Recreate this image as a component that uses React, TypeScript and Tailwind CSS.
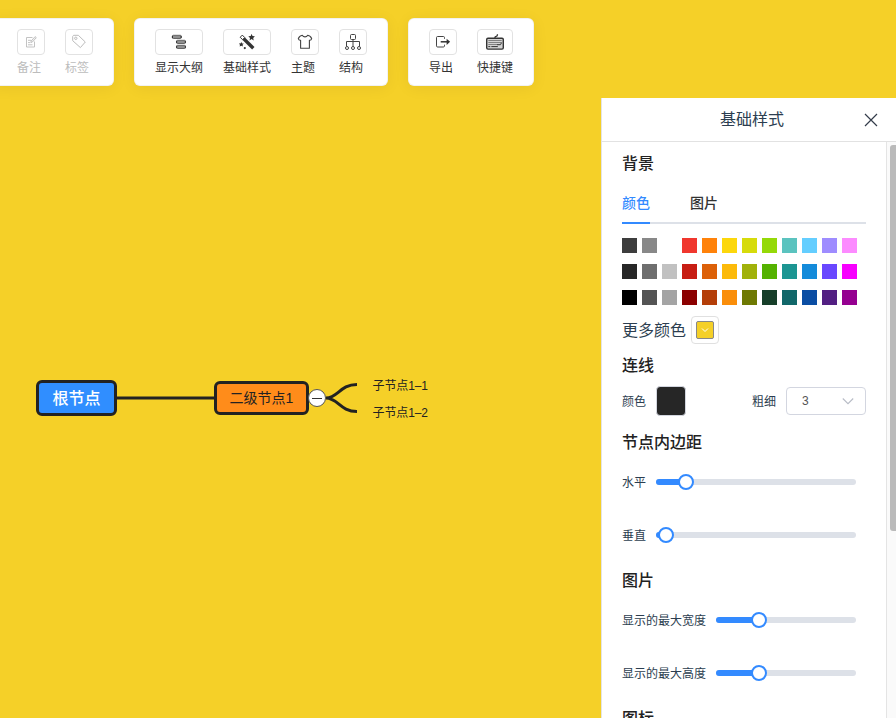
import React from 'react';

const swatches = [
  ['#3d3d3d', '#888888', '#ffffff', '#f0372e', '#ff820a', '#fcd70c', '#d6db0b', '#95d908', '#5bc3bf', '#64ceff', '#9e8cff', '#fc8bff'],
  ['#272727', '#6e6e6e', '#c1c1c1', '#c71d13', '#dc6008', '#fcba0a', '#a1b10a', '#55b200', '#1c9592', '#148bda', '#6947ff', '#f800ff'],
  ['#000000', '#545454', '#a4a4a4', '#8b0000', '#b43e08', '#fa8e0a', '#6e7903', '#163e29', '#116769', '#0a4da3', '#521f82', '#950090'],
];

function NoteIcon() {
  return (
    <svg width="16" height="16" viewBox="0 0 16 16" fill="none" stroke="currentColor" strokeWidth="0.9">
      <path d="M9.5 3.5h-6v9.5h8V7.5" strokeLinejoin="round" />
      <path d="M5 6.3h3M5 8.6h2M5 10.8h4.5" />
      <path d="M7.8 8.6l.4-1.7 3.9-4.3 1.2 1.1-3.9 4.3z" fill="currentColor" fillOpacity="0.25" />
    </svg>
  );
}

function TagIcon() {
  return (
    <svg width="16" height="16" viewBox="0 0 16 16" fill="none" stroke="currentColor" strokeWidth="1" strokeLinejoin="round">
      <path d="M1.7 2.4L2.6 1.3h4.7l7 6.7-4.9 5.6L1.7 6.7z" />
      <circle cx="4.8" cy="4.3" r="1.2" />
    </svg>
  );
}

function OutlineIcon() {
  return (
    <svg width="16" height="16" viewBox="0 0 16 16" fill="#8f8f8f" stroke="#666666" strokeWidth="1">
      <rect x="1.3" y="1.3" width="9" height="3.2" rx="1" />
      <rect x="5.5" y="6.3" width="9" height="3.2" rx="1" />
      <rect x="5.5" y="11.3" width="9" height="3.2" rx="1" />
      <path d="M1.5 2v2M10.1 2v2M5.7 7v2M14.3 7v2M5.7 12v2M14.3 12v2" stroke="#333333" />
    </svg>
  );
}

function WandIcon() {
  return (
    <svg width="16" height="16" viewBox="0 0 16 16" fill="#333333">
      <path d="M4.5 4.5l9.8 9.7" stroke="#333333" strokeWidth="3.4" />
      <path d="M1.2 3.3l2.1-2.2L5.7 3.5 3.6 5.7z" fill="#ffffff" stroke="#333333" strokeWidth="1" strokeLinejoin="round" />
      <path d="M12.6-.2l.9 2.2 2.4.3-1.7 1.6.5 2.5-2.1-1.3-2.1 1.3.5-2.5L9.3 2.3l2.4-.3z" />
      <path d="M2.3 7.9l.8 1.5 1.7.2-1.2 1.2.3 1.7-1.6-.8-1.6.8.3-1.7L-.1 9.6l1.6-.2z" />
      <circle cx="5.8" cy="14.1" r="1.1" />
    </svg>
  );
}

function ShirtIcon() {
  return (
    <svg width="16" height="16" viewBox="0 0 16 16" fill="none" stroke="#444444" strokeWidth="1.1" strokeLinejoin="round">
      <path d="M5.3 1.3C6.5 3.4 9.5 3.4 10.7 1.3c1.7.2 3.3 1.4 4 3.4-.4 1.2-1.4 1.7-2.3 1.5v8H3.6v-8c-.9.2-1.9-.3-2.3-1.5.7-2 2.3-3.2 4-3.4z" />
    </svg>
  );
}

function StructureIcon() {
  return (
    <svg width="16" height="16" viewBox="0 0 16 16" fill="none" stroke="#444444" strokeWidth="1">
      <rect x="5.5" y=".5" width="5" height="5" rx="1" />
      <path d="M8 5.5v7M1.5 12.2V7.5h13v4.7" />
      <circle cx="2" cy="14" r="1.5" />
      <circle cx="8" cy="14" r="1.5" />
      <circle cx="14" cy="14" r="1.5" />
    </svg>
  );
}

function ExportIcon() {
  return (
    <svg width="16" height="16" viewBox="0 0 16 16" fill="none" stroke="#444444" strokeWidth="1">
      <path d="M9.5 4.8V3.6c0-.7-.4-1.1-1.1-1.1H2.6c-.7 0-1.1.4-1.1 1.1v8.3c0 .7.4 1.1 1.1 1.1h5.8c.7 0 1.1-.4 1.1-1.1v-1.2" />
      <path d="M5.7 7.8h7.5" strokeWidth="1.5" stroke="#333333" />
      <path d="M11.6 4.7L15.1 7.8l-3.5 3.1z" fill="#333333" stroke="none" />
    </svg>
  );
}

function KeyboardIcon() {
  return (
    <svg width="20" height="18" viewBox="0 0 20 18" fill="none" stroke="#333333">
      <path d="M10 5.5V4.2c0-.6.4-.9 1.2-.9.9 0 1.3-.4 1.3-2" strokeWidth="1.3" />
      <rect x="1.7" y="5.3" width="16.6" height="10.8" rx="1.3" strokeWidth="1.4" fill="#d4d4d4" />
      <path d="M3.3 7.5h13.4M3.3 9.5h13.4M3.3 11.5h9" stroke="#777777" strokeWidth=".9" />
      <path d="M3.3 13.6h2M6.3 13.6h6.5M12 11.7h3.5l1-2" strokeWidth="1" />
    </svg>
  );
}

function Tool({ label, children, disabled = false }: { label: string; children: React.ReactNode; disabled?: boolean }) {
  return (
    <div className={disabled ? 'flex min-w-7 flex-col text-[#bcbcbc]' : 'flex min-w-7 flex-col text-[#333333]'}>
      <div className="flex h-[26px] items-center justify-center rounded-[4px] border border-[#e2e2e2] bg-white">{children}</div>
      <span className="mt-[3px] whitespace-nowrap text-xs leading-[18px]">{label}</span>
    </div>
  );
}

function ToolGroup({ children }: { children: React.ReactNode }) {
  return (
    <div className="flex h-[68px] shrink-0 gap-5 rounded-md border border-black/5 bg-white px-5 pt-[10px] shadow-[0_2px_16px_0_rgba(0,0,0,0.06)]">
      {children}
    </div>
  );
}

function Title({ children }: { children: React.ReactNode }) {
  return <h2 className="h-[22px] text-base font-medium leading-5 text-[#222222]">{children}</h2>;
}

function Slider({ label, value }: { label: string; value: number }) {
  return (
    <div className="flex h-[38px] items-center pr-[10px] text-xs text-[#2c3e50]">
      <span className="mr-[10px] whitespace-nowrap">{label}</span>
      <div className="relative h-1.5 flex-1 rounded-full bg-[#dde1e8]">
        <div className="h-1.5 rounded-l-full bg-[#338aff]" style={{ width: `${value}%` }} />
        <div className="absolute -top-[5px] size-4 -translate-x-1/2 rounded-full border-2 border-[#338aff] bg-white" style={{ left: `${value}%` }} />
      </div>
    </div>
  );
}

function MindMap() {
  return (
    <div className="absolute inset-0 font-['Liberation_Sans','Noto_Sans_CJK_SC',sans-serif] text-[#222222]">
      <svg className="absolute inset-0" width="600" height="718" fill="none" stroke="#222222" strokeWidth="3">
        <path d="M115 398H216M326 398C338 398 340 384.5 357 384.5M326 398C338 398 340 411.5 357 411.5" />
      </svg>
      <div className="absolute left-[36px] top-[380px] flex h-[36px] w-[81px] items-center justify-center rounded-md border-3 border-[#222222] bg-[#308eff] pt-px text-base font-medium text-white">根节点</div>
      <div className="absolute left-[214px] top-[381px] flex h-[34px] w-[95px] items-center justify-center rounded-md border-3 border-[#222222] bg-[#ff8c1a] text-sm">二级节点1</div>
      <div className="absolute left-[308px] top-[389px] flex size-[18px] items-center justify-center rounded-full border border-[#555555] bg-white">
        <div className="h-px w-[10px] bg-[#333333]" />
      </div>
      <span className="absolute left-[372.5px] top-[377px] whitespace-nowrap text-xs leading-[18px] tracking-[-0.1px]">子节点1–1</span>
      <span className="absolute left-[372.5px] top-[404px] whitespace-nowrap text-xs leading-[18px] tracking-[-0.1px]">子节点1–2</span>
    </div>
  );
}

function StylePanel() {
  return (
    <aside className="relative mt-3 flex min-h-0 w-[295px] flex-1 flex-col self-end border-l border-[#e4e4e4] bg-white">
      <header className="flex h-11 shrink-0 items-center border-b border-[#e2e2e2] pl-[118px] pr-[18px] text-base text-[#2c3e50]">
        <span className="flex-1 pb-1 leading-5">基础样式</span>
        <svg width="14" height="14" viewBox="0 0 14 14" fill="none" stroke="#333c4a" strokeWidth="1.2"><path d="M1 1l12 12M13 1L1 13" /></svg>
      </header>
      <div className="flex min-h-0 flex-1 overflow-hidden">
        <div className="flex-1 pl-5 pr-5 pt-[10px]">
          <Title>背景</Title>
          <nav className="mt-[9px] flex h-[41px] gap-10 border-b-2 border-[#dde1e8] text-sm font-medium leading-[38px]">
            <span className="h-[41px] border-b-2 border-[#338aff] text-[#338aff]">颜色</span>
            <span className="text-[#333333]">图片</span>
          </nav>
          <div className="mt-[14px] flex flex-col gap-[11px]">
            {swatches.map((row, i) => (
              <div key={i} className="flex gap-[5px]">
                {row.map((color) => (
                  <span key={color} className="size-[15px]" style={{ backgroundColor: color }} />
                ))}
              </div>
            ))}
          </div>
          <div className="mt-[11px] flex h-7 items-center text-base text-[#2c3e50]">
            <span className="mr-[5px] pb-[2px]">更多颜色</span>
            <div className="flex size-7 items-center justify-center rounded-[4px] border border-[#e0e0e0]">
              <div className="flex size-[18px] items-center justify-center rounded-[2px] border border-[#888888] bg-[#f5d028]">
                <svg width="10" height="10" viewBox="0 0 10 10" fill="none" stroke="#ffffff"><path d="M2 3.5l3 3 3-3" /></svg>
              </div>
            </div>
          </div>
          <div className="mt-[10px]"><Title>连线</Title></div>
          <div className="mt-[10px] flex h-[30px] items-center text-xs text-[#2c3e50]">
            <span className="mr-[10px]">颜色</span>
            <div className="size-[30px] rounded-[4px] border border-[#d3d6df] bg-[#262626]" />
            <span className="ml-auto mr-[10px]">粗细</span>
            <div className="flex h-7 w-20 items-center justify-between rounded-[4px] border border-[#d3d6e0] pl-[15px] pr-[11px] font-['Liberation_Sans',sans-serif] text-[#555555]">
              <span>3</span>
              <svg width="12" height="12" viewBox="0 0 12 12" fill="none" stroke="#b8bcc6" strokeWidth="1.1"><path d="M.8 3.5L6 8.7l5.2-5.2" /></svg>
            </div>
          </div>
          <div className="mt-[15px]"><Title>节点内边距</Title></div>
          <div className="mt-[10px] flex flex-col gap-[15px]">
            <Slider label="水平" value={15} />
            <Slider label="垂直" value={5} />
          </div>
          <div className="mt-[15px]"><Title>图片</Title></div>
          <div className="mt-[10px] flex flex-col gap-[15px]">
            <Slider label="显示的最大宽度" value={31} />
            <Slider label="显示的最大高度" value={31} />
          </div>
          <div className="mt-[15px]"><Title>图标</Title></div>
        </div>
        <div className="flex w-[10px] shrink-0 justify-end border-l border-[#e4e4e4] bg-[#fafafa] pt-[3px]">
          <div className="h-[386px] w-[6px] rounded-l-[3px] bg-[#bababa]" />
        </div>
      </div>
    </aside>
  );
}

export default function App() {
  return (
    <div className="relative h-[718px] w-[896px] overflow-hidden bg-[#f5d028] font-['Noto_Sans_CJK_SC',sans-serif]">
      <MindMap />
      <div className="relative flex h-full flex-col pt-[18px]">
        <div className="-ml-2 flex gap-5">
          <ToolGroup>
            <div className="ml-1 flex gap-5">
              <Tool label="备注" disabled><NoteIcon /></Tool>
              <Tool label="标签" disabled><TagIcon /></Tool>
            </div>
          </ToolGroup>
          <ToolGroup>
            <Tool label="显示大纲"><OutlineIcon /></Tool>
            <Tool label="基础样式"><WandIcon /></Tool>
            <Tool label="主题"><ShirtIcon /></Tool>
            <Tool label="结构"><StructureIcon /></Tool>
          </ToolGroup>
          <ToolGroup>
            <Tool label="导出"><ExportIcon /></Tool>
            <Tool label="快捷键"><KeyboardIcon /></Tool>
          </ToolGroup>
        </div>
        <StylePanel />
      </div>
    </div>
  );
}
